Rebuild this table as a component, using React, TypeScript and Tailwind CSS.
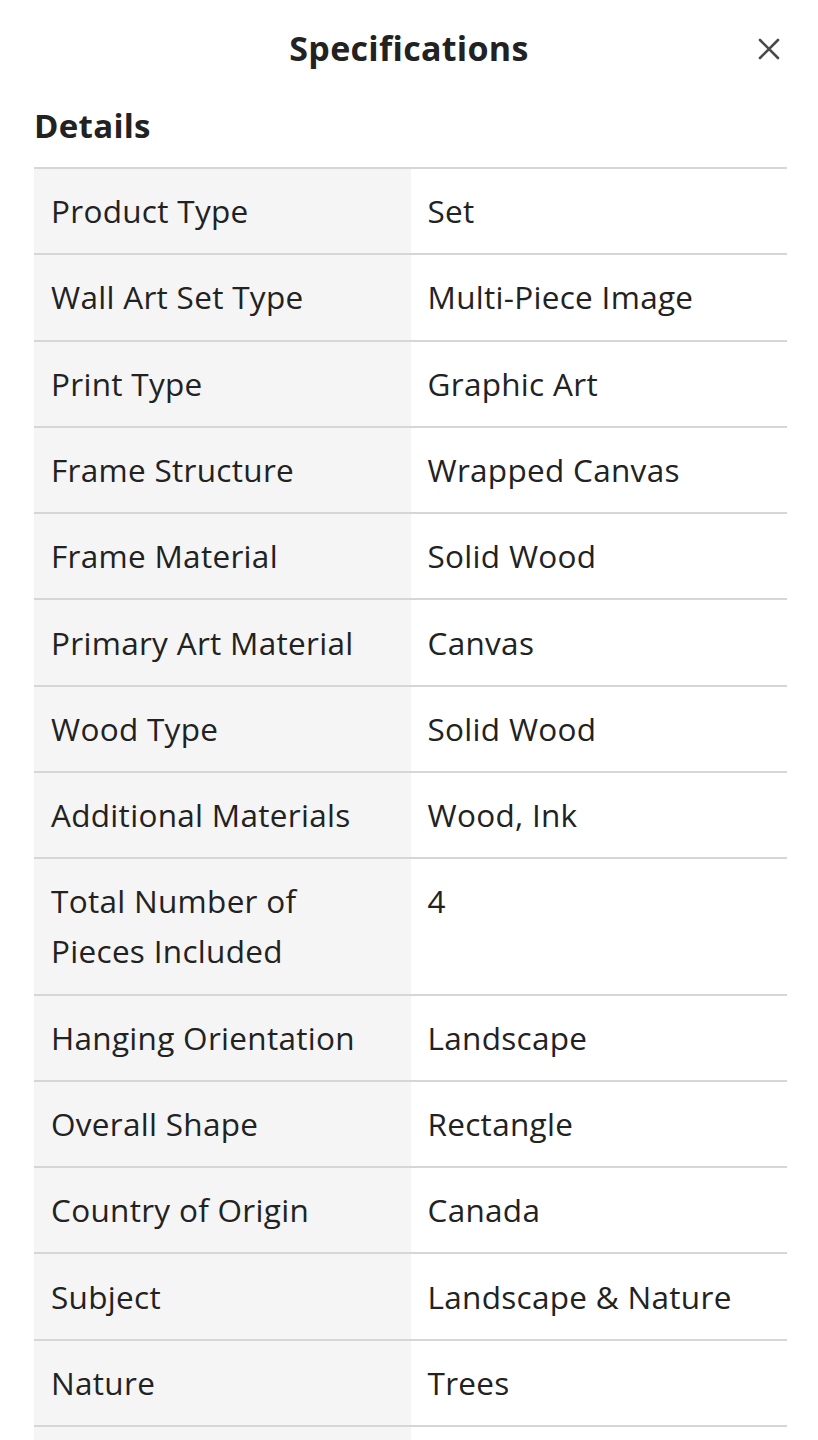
import React from 'react';

const specs: [string, string][] = [
  ['Product Type', 'Set'],
  ['Wall Art Set Type', 'Multi-Piece Image'],
  ['Print Type', 'Graphic Art'],
  ['Frame Structure', 'Wrapped Canvas'],
  ['Frame Material', 'Solid Wood'],
  ['Primary Art Material', 'Canvas'],
  ['Wood Type', 'Solid Wood'],
  ['Additional Materials', 'Wood, Ink'],
  ['Total Number of Pieces Included', '4'],
  ['Hanging Orientation', 'Landscape'],
  ['Overall Shape', 'Rectangle'],
  ['Country of Origin', 'Canada'],
  ['Subject', 'Landscape & Nature'],
  ['Nature', 'Trees'],
];

export default function App() {
  return (
    <div className="min-h-screen bg-white text-[#222] font-['Open_Sans','Noto_Sans',sans-serif]">
      {/* Header */}
      <div className="relative h-[99px] flex items-center justify-center">
        <h1 className="text-[34px] font-bold tracking-[0.3px] text-[#222] -mt-[2px]">Specifications</h1>
        <button className="absolute right-[36px] top-[36px] text-[#4a4a4a]" aria-label="Close">
          <svg width="26" height="26" viewBox="0 0 26 26" fill="none" stroke="currentColor" strokeWidth="2.6" strokeLinecap="round">
            <path d="M4 4L22 22M22 4L4 22" />
          </svg>
        </button>
      </div>

      <div className="px-[34px] pr-[31px]">
        <h2 className="text-[33px] font-bold leading-[54px] tracking-[0.3px]">Details</h2>
        <div className="mt-[14px] border-t-2 border-[#d6d6d6]">
          {specs.map(([k, v]) => (
            <div key={k} className="grid grid-cols-2 border-b-2 border-[#d6d6d6]">
              <div className="bg-[#f5f5f5] px-[17px] py-[17.15px] text-[31.5px] leading-[50px] tracking-[0.3px]">
                {k === 'Total Number of Pieces Included' ? (
                  <>Total Number of<br />Pieces Included</>
                ) : (
                  k
                )}
              </div>
              <div className="px-[17px] py-[17.15px] text-[31.5px] leading-[50px] tracking-[0.3px]">{v}</div>
            </div>
          ))}
          {/* next row, cut off by the screen edge */}
          <div className="grid grid-cols-2 h-[84px]">
            <div className="bg-[#f5f5f5]" />
            <div />
          </div>
        </div>
      </div>
    </div>
  );
}
